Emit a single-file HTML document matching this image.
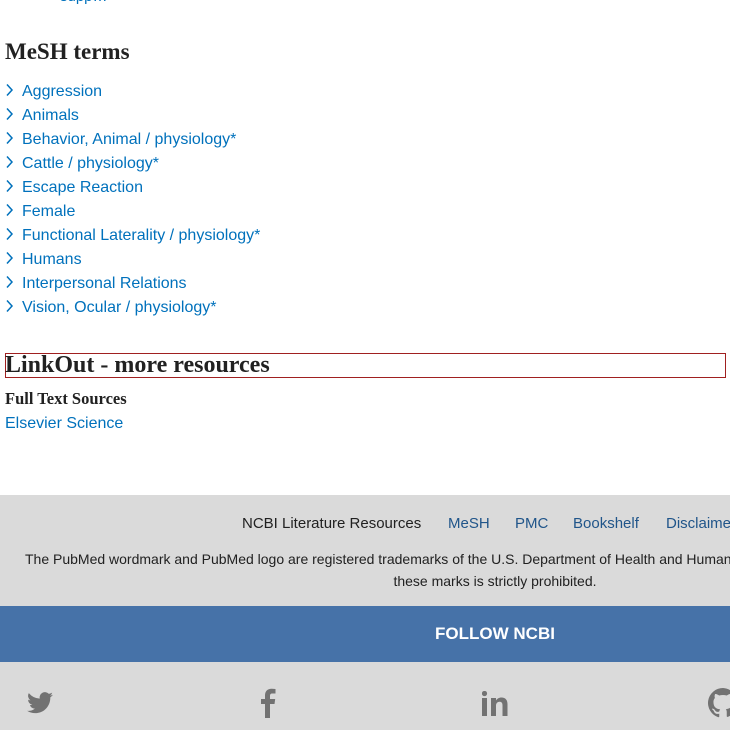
<!DOCTYPE html>
<html><head><meta charset="utf-8"><style>
html,body{margin:0;padding:0;width:730px;height:730px;overflow:hidden;background:#fff}
body{font-family:"Liberation Sans",sans-serif;position:relative}
a{color:#0071bc;text-decoration:none}
.h{position:absolute;left:5px;font-family:"Liberation Serif",serif;font-weight:bold;color:#212121;white-space:nowrap}
.li{position:absolute;left:5px;font-size:16px;height:24px;line-height:24px}
.li svg{position:absolute;left:0;top:3px}
.li a{position:absolute;left:17px;white-space:nowrap}
.wrap{position:absolute;left:0;top:495px;width:730px;height:235px;overflow:hidden;background:#dadada}
.foot{position:absolute;left:0;top:0;width:990px;height:235px}
.nav{position:absolute;top:20px;left:242px;font-size:15px;color:#212121;white-space:nowrap}
.nav span,.nav a{position:absolute;top:0}
.nav a{color:#20558a}
.tm{position:absolute;top:53px;left:0;width:990px;text-align:center;font-size:14px;line-height:22px;color:#212121;white-space:nowrap}
.band{position:absolute;top:111px;left:0;width:990px;height:56px;background:#4672a8;color:#fff;font-weight:bold;font-size:17px;text-align:center;line-height:56px}
.ic{position:absolute;fill:#727272}
</style></head><body>
<a style="position:absolute;left:60px;top:-12px;font-size:15px">supp…</a>
<div class="h" style="top:39px;font-size:23px">MeSH terms</div>
<div class="li" style="top:80px"><svg width="10" height="14"><path d="M2 1.5l5 5.5-5 5.5" stroke="#0071bc" stroke-width="1.5" fill="none"/></svg><a>Aggression</a></div>
<div class="li" style="top:104px"><svg width="10" height="14"><path d="M2 1.5l5 5.5-5 5.5" stroke="#0071bc" stroke-width="1.5" fill="none"/></svg><a>Animals</a></div>
<div class="li" style="top:128px"><svg width="10" height="14"><path d="M2 1.5l5 5.5-5 5.5" stroke="#0071bc" stroke-width="1.5" fill="none"/></svg><a>Behavior, Animal / physiology*</a></div>
<div class="li" style="top:152px"><svg width="10" height="14"><path d="M2 1.5l5 5.5-5 5.5" stroke="#0071bc" stroke-width="1.5" fill="none"/></svg><a>Cattle / physiology*</a></div>
<div class="li" style="top:176px"><svg width="10" height="14"><path d="M2 1.5l5 5.5-5 5.5" stroke="#0071bc" stroke-width="1.5" fill="none"/></svg><a>Escape Reaction</a></div>
<div class="li" style="top:200px"><svg width="10" height="14"><path d="M2 1.5l5 5.5-5 5.5" stroke="#0071bc" stroke-width="1.5" fill="none"/></svg><a>Female</a></div>
<div class="li" style="top:224px"><svg width="10" height="14"><path d="M2 1.5l5 5.5-5 5.5" stroke="#0071bc" stroke-width="1.5" fill="none"/></svg><a>Functional Laterality / physiology*</a></div>
<div class="li" style="top:248px"><svg width="10" height="14"><path d="M2 1.5l5 5.5-5 5.5" stroke="#0071bc" stroke-width="1.5" fill="none"/></svg><a>Humans</a></div>
<div class="li" style="top:272px"><svg width="10" height="14"><path d="M2 1.5l5 5.5-5 5.5" stroke="#0071bc" stroke-width="1.5" fill="none"/></svg><a>Interpersonal Relations</a></div>
<div class="li" style="top:296px"><svg width="10" height="14"><path d="M2 1.5l5 5.5-5 5.5" stroke="#0071bc" stroke-width="1.5" fill="none"/></svg><a>Vision, Ocular / physiology*</a></div>
<div style="position:absolute;left:5px;top:353px;width:719px;height:23px;border:1px solid #a02020"></div>
<div class="h" style="top:352px;font-size:24px">LinkOut - more resources</div>
<div class="h" style="top:389px;font-size:16.5px">Full Text Sources</div>
<a style="position:absolute;left:5px;top:415px;font-size:16px">Elsevier Science</a>
<div class="wrap"><div class="foot">
<div class="nav"><span style="left:0">NCBI Literature Resources</span><a style="left:206px">MeSH</a><a style="left:273px">PMC</a><a style="left:331px">Bookshelf</a><a style="left:424px">Disclaimer</a></div>
<div class="tm">The PubMed wordmark and PubMed logo are registered trademarks of the U.S. Department of Health and Human Services (HHS). Unauthorized use of<br>these marks is strictly prohibited.</div>
<div class="band">FOLLOW NCBI</div>
<svg class="ic" style="left:27px;top:197px" width="26" height="22" viewBox="0 0 24 20"><path d="M24 2.4a9.8 9.8 0 0 1-2.8.8A4.9 4.9 0 0 0 23.3.4a9.9 9.9 0 0 1-3.1 1.2A4.9 4.9 0 0 0 11.8 6 14 14 0 0 1 1.7.9a4.9 4.9 0 0 0 1.5 6.6 4.9 4.9 0 0 1-2.2-.6 4.9 4.9 0 0 0 3.9 4.8 4.9 4.9 0 0 1-2.2.1 4.9 4.9 0 0 0 4.6 3.4A9.9 9.9 0 0 1 0 17.2 14 14 0 0 0 7.5 19.4c9.1 0 14-7.5 14-14v-.6A10 10 0 0 0 24 2.4z"/></svg>
<svg class="ic" style="left:260px;top:193px" width="16" height="30" viewBox="0 0 16 30"><path d="M10 30V16h4.5l.7-5H10V8c0-1.5.4-2.5 2.5-2.5H15.5V1a36 36 0 0 0-4-.2C7.5.8 5 3.2 5 7.6V11H1v5h4v14z"/></svg>
<svg class="ic" style="left:482px;top:196px" width="26" height="25" viewBox="0 0 26 25"><rect x="0" y="7" width="5" height="18"/><circle cx="2.5" cy="2.5" r="2.6"/><path d="M9 7h5v2.5c1-1.7 3-3 5.5-3 4 0 6 2.5 6 7V25h-5V14.5c0-2.5-1-3.7-3-3.7s-3.5 1.4-3.5 4V25H9z"/></svg>
<svg class="ic" style="left:708px;top:193px" width="30" height="30" viewBox="0 0 16 16"><path d="M8 0a8 8 0 0 0-2.5 15.6c.4 0 .5-.2.5-.4v-1.5c-2.2.5-2.7-1-2.700-1-.4-.9-.9-1.2-.9-1.2-.7-.5.1-.5.1-.5.8.1 1.2.8 1.2.8.7 1.3 1.9.9 2.3.7.1-.5.3-.9.5-1.1-1.8-.2-3.6-.9-3.6-4 0-.9.3-1.6.8-2.1-.1-.2-.4-1 .1-2.1 0 0 .7-.2 2.2.8a7.5 7.5 0 0 1 4 0c1.5-1 2.2-.8 2.2-.8.4 1.1.2 1.9.1 2.1.5.6.8 1.3.8 2.1 0 3.1-1.9 3.7-3.6 3.900.3.3.5.8.5 1.5v2.2c0 .2.1.5.6.4A8 8 0 0 0 8 0z"/></svg>
</div></div>
</body></html>
